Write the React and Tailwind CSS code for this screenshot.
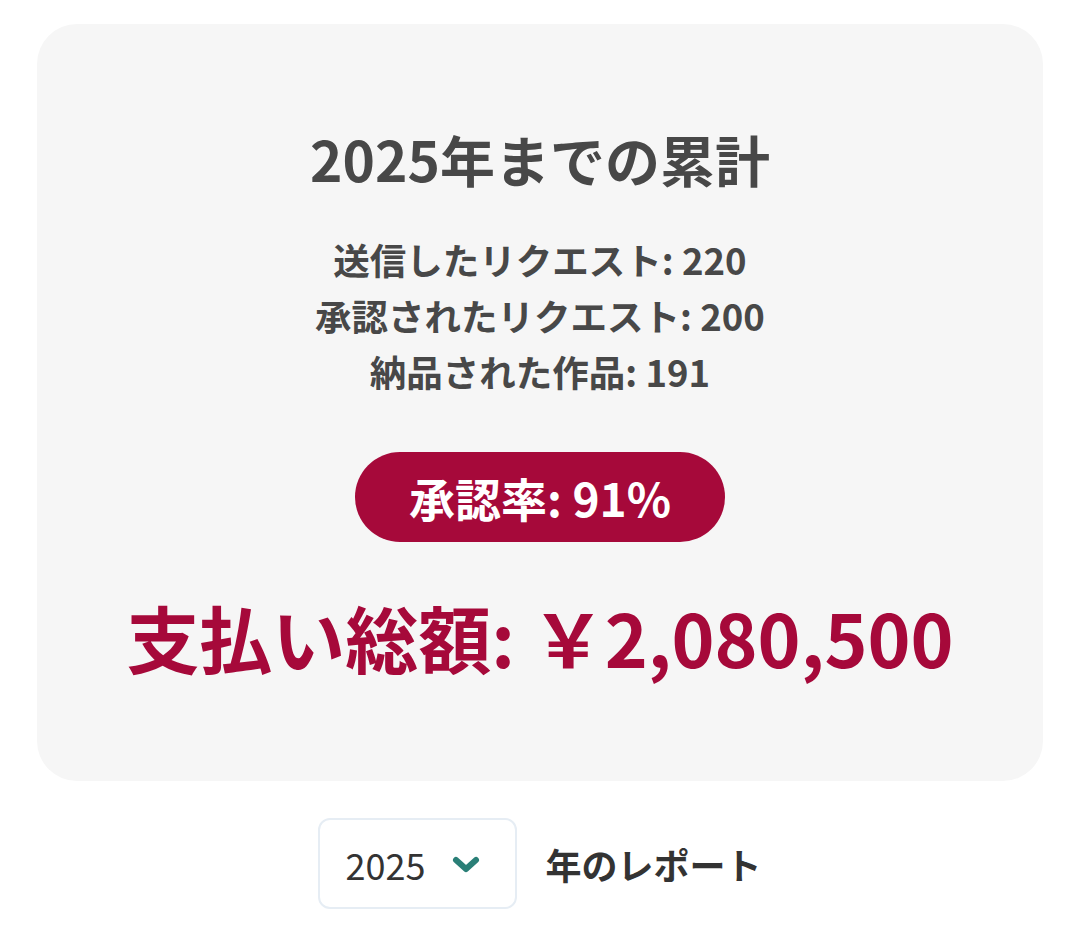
const stats = [
  { label: "送信したリクエスト", value: 220 },
  { label: "承認されたリクエスト", value: 200 },
  { label: "納品された作品", value: 191 },
];

export default function App() {
  return (
    <div
      className="min-h-screen bg-white flex flex-col items-center pt-6"
      style={{ fontFamily: "'Noto Sans CJK JP', 'Noto Sans', sans-serif" }}
    >
      {/* Summary card */}
      <div className="w-[1006px] h-[757px] rounded-[40px] bg-[#f6f6f6] flex flex-col items-center pt-[98px]">
        <h2 className="text-[55px] leading-[72px] font-bold text-[#484848]">2025年までの累計</h2>

        <div className="mt-[38px] flex flex-col items-center text-[36.5px] leading-[56px] font-bold text-[#484848]">
          {stats.map((s) => (
            <p key={s.label}>
              {s.label}: {s.value}
            </p>
          ))}
        </div>

        <div className="mt-[52px] w-[370px] h-[90px] rounded-full bg-[#a6093a] flex items-center justify-center text-white text-[46px] font-bold">
          承認率: 91%
        </div>

        <p className="mt-[46px] text-[73px] leading-[96px] font-bold text-[#a6093a]">
          支払い総額: ￥2,080,500
        </p>
      </div>

      {/* Year selector */}
      <div className="mt-[37px] flex items-center gap-7">
        <div className="w-[199px] h-[91px] rounded-xl border-2 border-[#e6edf4] bg-white flex items-center pl-[25px] gap-[26px]">
          <span className="text-[36px] text-[#333]">2025</span>
          <svg width="30" height="20" viewBox="0 0 30 20" fill="none">
            <polyline
              points="5,6 15,15 25,6"
              stroke="#2a7f77"
              strokeWidth="6"
              strokeLinecap="round"
              strokeLinejoin="round"
            />
          </svg>
        </div>
        <span className="text-[36px] font-bold text-[#333]">年のレポート</span>
      </div>
    </div>
  );
}
